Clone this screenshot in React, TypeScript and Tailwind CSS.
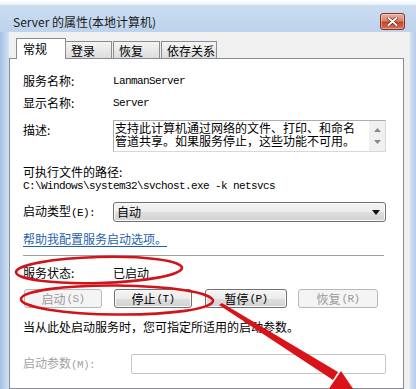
import React from "react";

const MONO = "font-['Liberation_Mono',monospace] text-[11px] tracking-[-0.6px]";

function Btn({ label, k, w, ml, disabled }: { label: string; k: string; w: string; ml: string; disabled?: boolean }) {
  return (
    <div
      className={
        "flex items-center justify-center h-[19px] rounded-[3px] border " +
        w +
        " " +
        ml +
        " " +
        (disabled
          ? "border-[#b5b9bc] bg-[#f4f4f4] text-[#9a9a9a]"
          : "border-[#707070] bg-[linear-gradient(to_bottom,#f4f4f4_0%,#ececec_50%,#dedede_50%,#d2d2d2_100%)] shadow-[inset_0_0_0_1px_#fbfbfb] text-black")
      }
    >
      <span>{label}</span>
      <span className={MONO + " ml-[1px]"}>({k})</span>
    </div>
  );
}

export default function App() {
  return (
    <div className="relative w-[416px] h-[389px] overflow-hidden bg-white font-['Noto_Sans_CJK_SC',sans-serif] text-[12px] leading-[16px] text-black">
      <div className="h-[5px] bg-[linear-gradient(to_bottom,#ffffff,#e9f0f8)]" />
      <div className="flex flex-col h-[384px] bg-[linear-gradient(to_bottom,#cadcf1,#bcd2eb_30px,#b4cbe8)]">
        {/* title bar */}
        <div className="flex h-[27px] shrink-0">
          <div className="pl-[13px] pt-[9px] text-[#1b1b1b]">Server 的属性(本地计算机)</div>
          <div className="ml-auto mr-[11px] mt-[8px] w-[25px] h-[17px] rounded-[3px] border border-[#84311f] bg-[linear-gradient(to_bottom,#eab0a2_0%,#dc8167_45%,#c64529_55%,#d97058_100%)] shadow-[inset_0_0_0_1px_rgba(255,255,255,0.35)] flex items-center justify-center">
            <svg width="11" height="9" viewBox="0 0 11 9">
              <path d="M1.5 1 L9.5 8 M9.5 1 L1.5 8" stroke="#5a1a10" strokeWidth="3.2" strokeLinecap="round" />
              <path d="M1.5 1 L9.5 8 M9.5 1 L1.5 8" stroke="#ffffff" strokeWidth="2" strokeLinecap="round" />
            </svg>
          </div>
        </div>
        <div className="flex flex-1 min-h-0">
          <div className="w-[9px] bg-[linear-gradient(to_right,#a3c0e3,#bdd3ec_5px,#d4e3f4)]" />
          <div className="flex flex-col flex-1 bg-[#f0f0f0] pt-[6px] pr-[6px]">
            {/* tabs */}
            <div className="flex items-end h-[21px] pl-[7px]">
              <div className="relative z-10 w-[50px] h-[21px] bg-white border border-b-0 border-[#898c95] pl-[6px] pt-[2px]">常规</div>
              <div className="w-[46px] h-[17px] mb-[1px] border border-l-0 border-b-0 border-[#898c95] bg-[linear-gradient(to_bottom,#f4f4f4,#e8e8e8_50%,#dcdcdc)] pl-[5px] pt-[1px]">登录</div>
              <div className="w-[47px] h-[17px] mb-[1px] ml-[1px] border border-b-0 border-[#898c95] bg-[linear-gradient(to_bottom,#f4f4f4,#e8e8e8_50%,#dcdcdc)] pl-[5px] pt-[1px]">恢复</div>
              <div className="w-[56px] h-[17px] mb-[1px] ml-[1px] border border-b-0 border-[#898c95] bg-[linear-gradient(to_bottom,#f4f4f4,#e8e8e8_50%,#dcdcdc)] pl-[5px] pt-[1px]">依存关系</div>
            </div>
            {/* panel */}
            <div className="-mt-[1px] flex-1 bg-white border border-[#898c95] pl-[13px] pr-[17px] pt-[14px] flex flex-col">
              <div className="flex h-[16px]">
                <div className="w-[90px]">服务名称:</div>
                <div className={MONO}>LanmanServer</div>
              </div>
              <div className="flex h-[16px] mt-[6px]">
                <div className="w-[90px]">显示名称:</div>
                <div className={MONO}>Server</div>
              </div>
              <div className="flex h-[32px] mt-[9px]">
                <div className="w-[90px] pt-[2px]">描述:</div>
                <div className="flex flex-1 border border-[#a9adb5] border-r-[#d5d8dc] border-b-[#d5d8dc] bg-white">
                  <div className="flex-1 pl-[1px] leading-[13px] text-[12px] whitespace-nowrap">
                    <div>支持此计算机通过网络的文件、打印、和命名</div>
                    <div>管道共享。如果服务停止，这些功能不可用。</div>
                  </div>
                  <div className="w-[16px] bg-[#f0f0f0] flex flex-col items-center justify-between py-[7px]">
                    <svg width="7" height="4" viewBox="0 0 7 4"><path d="M0 4 L3.5 0 L7 4 Z" fill="#8a8a8a" /></svg>
                    <svg width="7" height="4" viewBox="0 0 7 4"><path d="M0 0 L3.5 4 L7 0 Z" fill="#8a8a8a" /></svg>
                  </div>
                </div>
              </div>
              <div className="h-[14px] leading-[14px] mt-[13px]">可执行文件的路径:</div>
              <div className={"h-[14px] leading-[14px] " + MONO}>{"C:\\Windows\\system32\\svchost.exe -k netsvcs"}</div>
              <div className="flex h-[20px] mt-[9px] items-center">
                <div className="w-[90px]">
                  启动类型<span className={MONO}>(E):</span>
                </div>
                <div className="flex-1 h-[20px] flex items-center rounded-[3px] border border-[#707070] bg-[linear-gradient(to_bottom,#f4f4f4_0%,#ececec_50%,#dedede_50%,#d2d2d2_100%)] shadow-[inset_0_0_0_1px_#fbfbfb] pl-[3px] pr-[5px]">
                  <span className="flex-1">自动</span>
                  <svg width="8" height="5" viewBox="0 0 8 5"><path d="M0 0 L8 0 L4 5 Z" fill="#111" /></svg>
                </div>
              </div>
              <div className="h-[16px] mt-[9px]">
                <span className="text-[#1f62ad] underline underline-offset-[2px]">帮助我配置服务启动选项。</span>
              </div>
              <div className="h-px mt-[8px] mr-[2px] bg-[#a0a0a0]" />
              <div className="flex h-[16px] mt-[9px]">
                <div className="w-[90px]">服务状态:</div>
                <div>已启动</div>
              </div>
              <div className="flex h-[19px] mt-[8px]">
                <Btn label="启动" k="S" w="w-[78px]" ml="ml-[1px]" disabled />
                <Btn label="停止" k="T" w="w-[78px]" ml="ml-[12px]" />
                <Btn label="暂停" k="P" w="w-[82px]" ml="ml-[13px]" />
                <Btn label="恢复" k="R" w="w-[80px]" ml="ml-[11px]" disabled />
              </div>
              <div className="h-[16px] mt-[11px]">当从此处启动服务时，您可指定所适用的启动参数。</div>
              <div className="flex h-[20px] mt-[19px] items-center">
                <div className="w-[108px] text-[#a3a3a3]">
                  启动参数<span className={MONO}>(M):</span>
                </div>
                <div className="flex-1 h-[20px] border border-[#c3c6ca] rounded-[2px] bg-white" />
              </div>
            </div>
          </div>
          <div className="w-[6px] bg-[linear-gradient(to_right,#d2e1f3,#b6cce8)]" />
        </div>
      </div>
      {/* red annotations */}
      <svg className="absolute inset-0 pointer-events-none" width="416" height="389" viewBox="0 0 416 389">
        <ellipse cx="99" cy="270" rx="83" ry="13" transform="rotate(-1.5 99 270)" fill="none" stroke="#d0141a" strokeWidth="2.6" />
        <ellipse cx="117" cy="300" rx="96" ry="14.5" transform="rotate(0.5 117 300)" fill="none" stroke="#d0141a" strokeWidth="2.6" />
        <polygon points="219,305 222,303 338,372 333,380" fill="#d8141a" />
        <polygon points="341,371 328,390 358,396" fill="#d8141a" />
      </svg>
    </div>
  );
}
